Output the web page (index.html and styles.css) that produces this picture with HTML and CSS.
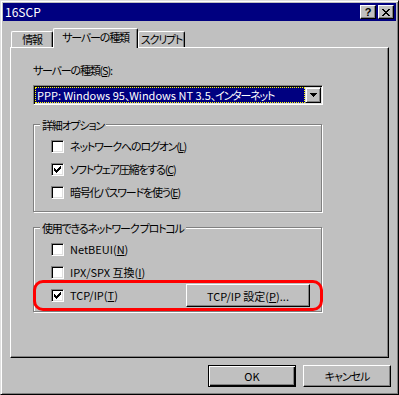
FILE: index.html
```html
<!DOCTYPE html>
<html lang="ja">
<head>
  <meta charset="UTF-8">
  <title>16SCP</title>
  <link rel="stylesheet" href="styles.css">
</head>
<body>
  <div class="window">
    <div class="titlebar">
      <span class="title">16SCP</span>
      <div class="title-buttons">
        <span class="tbtn help">?</span>
        <span class="tbtn">
          <svg width="8" height="7" viewBox="0 0 8 7" shape-rendering="crispEdges">
            <path d="M0 0h2v1h-2z M6 0h2v1h-2z M1 1h2v1h-2z M5 1h2v1h-2z M2 2h4v1h-4z M3 3h2v1h-2z M2 4h4v1h-4z M1 5h2v1h-2z M5 5h2v1h-2z M0 6h2v1h-2z M6 6h2v1h-2z" fill="#000"/>
          </svg>
        </span>
      </div>
    </div>

    <div class="tabs">
      <div class="tab tab-info ja">情報</div>
      <div class="tab tab-server active ja">サーバーの種類</div>
      <div class="tab tab-script ja">スクリプト</div>
    </div>

    <div class="panel">
      <div class="field-label ja">サーバーの種類(<u>S</u>):</div>
      <div class="combo">
        <div class="combo-value"><span>PPP: Windows 95</span><span class="ja">、</span><span>Windows NT 3.5</span><span class="ja">、インターネット</span></div>
        <div class="combo-btn">
          <svg width="7" height="4" viewBox="0 0 7 4" shape-rendering="crispEdges">
            <path d="M0 0h7v1h-7z M1 1h5v1h-5z M2 2h3v1h-3z M3 3h1v1h-1z" fill="#000"/>
          </svg>
        </div>
      </div>

      <!-- 詳細オプション -->
      <div class="group opts">
        <div class="legend ja">詳細オプション</div>
        <label class="check ja"><span class="box"></span>ネットワークへのログオン(<u>L</u>)</label>
        <label class="check ja"><span class="box checked"></span>ソフトウェア圧縮をする(<u>C</u>)</label>
        <label class="check ja"><span class="box"></span>暗号化パスワードを使う(<u>E</u>)</label>
      </div>

      <!-- プロトコル -->
      <div class="group protos">
        <div class="legend ja">使用できるネットワーク プロトコル</div>
        <label class="check"><span class="box"></span>NetBEUI(<u>N</u>)</label>
        <label class="check"><span class="box"></span>IPX/SPX 互換(<u>I</u>)</label>
        <div class="highlight">
          <label class="check"><span class="box checked"></span>TCP/IP(<u>T</u>)</label>
          <button class="btn setup">TCP/IP 設定(<u>P</u>)...</button>
        </div>
      </div>
    </div>

    <div class="actions">
      <button class="btn default">OK</button>
      <button class="btn ja">キャンセル</button>
    </div>
  </div>
</body>
</html>
```

FILE: styles.css
```css
body {
  margin: 0;
  font-family: "Noto Sans CJK JP", "Noto Sans", sans-serif;
  font-size: 11px;
  font-feature-settings: "palt";
  color: #000;
  background: #c0c0c0;
}
u {
  text-decoration-thickness: 1px;
  text-underline-offset: 1px;
}
/* bitmap UI font had narrow kana */
.ja {
  letter-spacing: -1.2px;
}
.window {
  width: 399px;
  height: 395px;
  box-sizing: border-box;
  border: 1px solid;
  border-color: #dfdfdf #000 #000 #dfdfdf;
  box-shadow: inset 1px 1px #fff, inset -1px -1px #808080;
  padding: 2px;
  background: #c0c0c0;
}

/* title bar */
.titlebar {
  height: 18px;
  background: #000080;
  color: #fff;
  display: flex;
  align-items: center;
  justify-content: space-between;
  padding: 0 2px;
}
.title {
  line-height: 16px;
  font-size: 12px;
}
.title-buttons {
  display: flex;
  gap: 2px;
}
.tbtn {
  width: 16px;
  height: 14px;
  box-sizing: border-box;
  background: #c0c0c0;
  border: 1px solid;
  border-color: #fff #000 #000 #fff;
  box-shadow: inset -1px -1px #808080;
  display: flex;
  align-items: center;
  justify-content: center;
}
.tbtn.help {
  color: #000;
  font-family: "Liberation Sans", sans-serif;
  font-weight: bold;
  font-size: 11px;
  line-height: 12px;
}

/* tabs */
.tabs {
  display: flex;
  align-items: flex-end;
  height: 19px;
  margin-top: 7px;
  padding-left: 8px;
}
.tab {
  height: 16px;
  box-sizing: border-box;
  border-top: 1px solid #fff;
  border-left: 1px solid #fff;
  border-right: 1px solid #000;
  border-radius: 2px 2px 0 0;
  box-shadow: inset -1px 0 #808080;
  background: #c0c0c0;
  text-align: center;
  line-height: 14px;
  white-space: nowrap;
}
.tab-info { width: 42px; }
.tab-server { width: 85px; }
.tab-script { width: 47px; }
.tab.active {
  height: 20px;
  margin-bottom: -1px;
  z-index: 1;
  line-height: 17px;
}

/* tab page */
.panel {
  width: 379px;
  height: 311px;
  margin-left: 7px;
  box-sizing: border-box;
  border: 1px solid;
  border-color: #fff #000 #000 #fff;
  box-shadow: inset -1px -1px #808080;
  padding: 15px 0 0 22px;
}
.field-label {
  line-height: 14px;
}
.combo {
  width: 290px;
  height: 20px;
  margin-top: 8px;
  box-sizing: border-box;
  border: 1px solid;
  border-color: #808080 #fff #fff #808080;
  box-shadow: inset 1px 1px #000, inset -1px -1px #dfdfdf;
  padding: 1px;
  background: #fff;
  display: flex;
}
.combo-value {
  flex: 1;
  box-sizing: border-box;
  background: #000080;
  color: #fff;
  border: 1px dotted #ffff00;
  padding-left: 1px;
  line-height: 14px;
  white-space: nowrap;
  overflow: hidden;
}
.combo-btn {
  width: 16px;
  box-sizing: border-box;
  background: #c0c0c0;
  border: 1px solid;
  border-color: #dfdfdf #000 #000 #dfdfdf;
  box-shadow: inset 1px 1px #fff, inset -1px -1px #808080;
  display: flex;
  align-items: center;
  justify-content: center;
}

/* group boxes */
.group {
  width: 289px;
  box-sizing: border-box;
  border: 1px solid #808080;
  box-shadow: inset 1px 1px #fff, 1px 1px #fff;
  padding-left: 17px;
}
.opts {
  height: 88px;
  margin-top: 19px;
}
.protos {
  height: 85px;
  margin-top: 15px;
}
.legend {
  width: fit-content;
  height: 14px;
  line-height: 14px;
  margin: -7px 0 0 -11px;
  padding: 0 2px;
  background: #c0c0c0;
}
.check {
  display: flex;
  align-items: center;
  height: 13px;
  line-height: 13px;
  margin-top: 10px;
  white-space: nowrap;
}
.legend + .check {
  margin-top: 8px;
}
.box {
  width: 13px;
  height: 13px;
  box-sizing: border-box;
  border: 1px solid;
  border-color: #808080 #fff #fff #808080;
  box-shadow: inset 1px 1px #000, inset -1px -1px #dfdfdf;
  background: #fff;
  margin-right: 6px;
  flex: none;
}
.box.checked {
  background: #fff url("data:image/svg+xml,%3Csvg xmlns='http://www.w3.org/2000/svg' width='11' height='11' viewBox='0 0 11 11' shape-rendering='crispEdges'%3E%3Cpath d='M2 4h1v3h-1z M3 5h1v3h-1z M4 6h1v3h-1z M5 5h1v3h-1z M6 4h1v3h-1z M7 3h1v3h-1z M8 2h1v3h-1z' fill='%23000'/%3E%3C/svg%3E") no-repeat 0 0;
}

/* TCP/IP row, circled in red */
.highlight {
  width: 290px;
  height: 31px;
  margin: 1px 0 0 -18px;
  box-sizing: border-box;
  border: 3px solid #ff0000;
  border-radius: 10px;
  padding: 0 10px 0 15px;
  display: flex;
  align-items: center;
  justify-content: space-between;
}
.highlight .check {
  margin-top: 0;
}

/* buttons */
.btn {
  font: inherit;
  font-feature-settings: "palt";
  color: #000;
  background: #c0c0c0;
  border: 1px solid;
  border-color: #fff #000 #000 #fff;
  box-shadow: inset -1px -1px #808080;
  padding: 0;
  line-height: 14px;
}
.btn.ja {
  letter-spacing: -1px;
}
.setup {
  width: 124px;
  height: 23px;
}
.actions {
  display: flex;
  justify-content: flex-end;
  gap: 7px;
  margin-top: 7px;
  padding-right: 5px;
}
.actions .btn {
  width: 88px;
  height: 22px;
}
.btn.default {
  border-color: #000;
  box-shadow: inset 1px 1px #fff, inset -1px -1px #000, inset -2px -2px #808080;
}
```
